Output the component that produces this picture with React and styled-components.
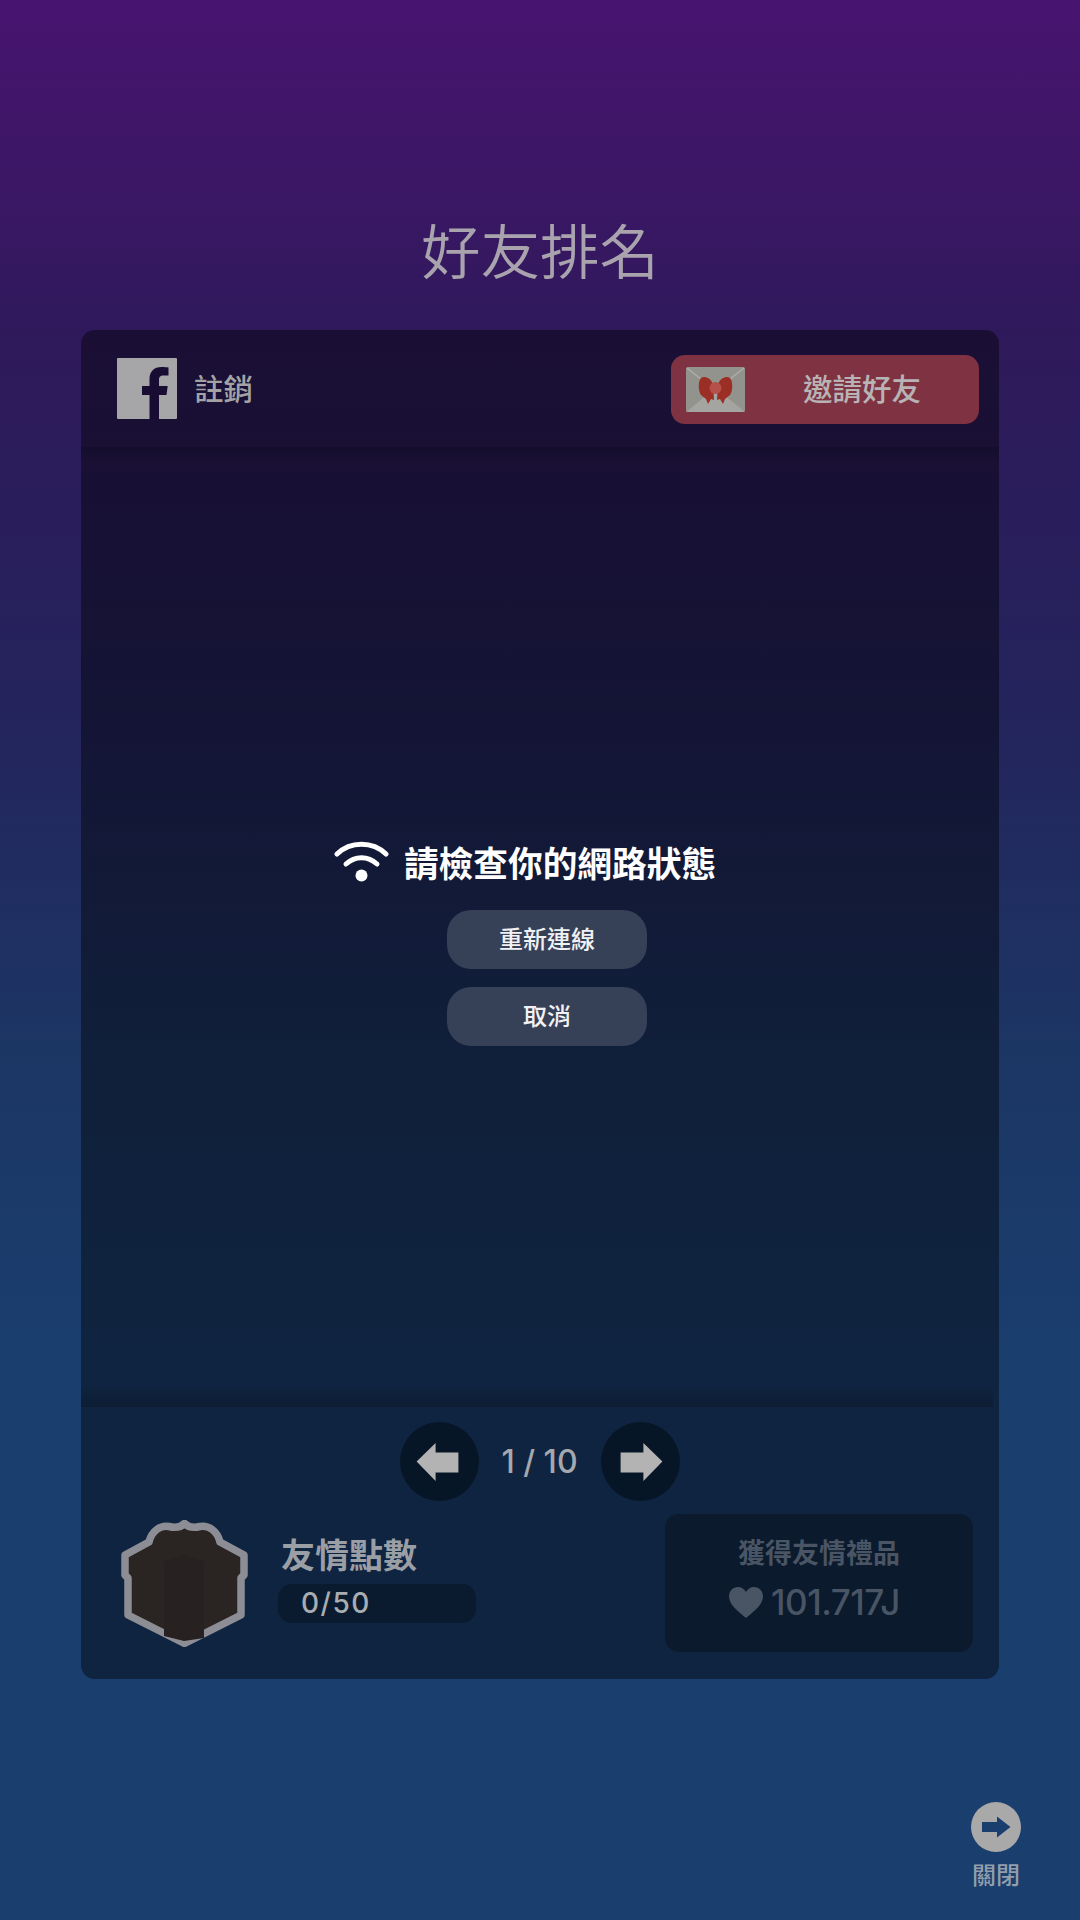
import React from 'react';
import styled, { createGlobalStyle } from 'styled-components';

const GlobalStyle = createGlobalStyle`
  html, body {
    margin: 0;
    padding: 0;
    background: #1a3e6e;
  }
  * {
    box-sizing: border-box;
  }
`;

const cjk = `"Noto Sans CJK TC", "Noto Sans", sans-serif`;
const latin = `Inter, "Noto Sans CJK TC", sans-serif`;

const Page = styled.div`
  width: 1080px;
  height: 1920px;
  overflow: hidden;
  display: flex;
  flex-direction: column;
  font-family: ${cjk};
  background: linear-gradient(
    to bottom,
    #47146f 0,
    #3c1766 180px,
    #2f195b 330px,
    #24235c 700px,
    #1c3664 1050px,
    #1a3e6e 1350px
  );
`;

const TitleBar = styled.div`
  height: 330px;
  padding-top: 208px;
  text-align: center;
`;

const Title = styled.h1`
  margin: 0;
  font-size: 59.5px;
  line-height: 80px;
  font-weight: 350;
  color: #a8a3ad;
`;

const Panel = styled.section`
  width: 918px;
  height: 1349px;
  margin-left: 81px;
  border-radius: 14px;
  overflow: hidden;
  background: rgba(0, 0, 0, 0.42);
  display: flex;
  flex-direction: column;
`;

const PanelHeader = styled.header`
  height: 117px;
  padding: 0 20px 0 36px;
  display: flex;
  align-items: center;
  justify-content: space-between;
  flex-shrink: 0;
`;

const Account = styled.div`
  display: flex;
  align-items: center;
  gap: 17px;
  color: #a3a3a6;
  font-size: 29.5px;
  font-weight: 500;
`;

const AccountLabel = styled.span`
  padding-bottom: 4px;
`;

const InviteButton = styled.button`
  width: 308px;
  height: 69px;
  margin-top: 1px;
  padding: 0 15px;
  border: 0;
  border-radius: 14px;
  background: #7f3342;
  color: #b8b3b5;
  font-family: inherit;
  font-size: 29.5px;
  font-weight: 500;
  display: flex;
  align-items: center;
`;

const InviteLabel = styled.span`
  margin-left: 58px;
  padding-bottom: 4px;
`;

const ListArea = styled.div`
  height: 960px;
  flex-shrink: 0;
  padding-top: 29px;
  display: flex;
  flex-direction: column;
  align-items: center;
  justify-content: center;
  background:
    linear-gradient(to bottom, rgba(0, 0, 0, 0.17), rgba(0, 0, 0, 0)) left top / 100% 16px no-repeat,
    linear-gradient(to top, rgba(0, 0, 0, 0.2), rgba(0, 0, 0, 0)) left bottom / calc(100% - 6px) 22px no-repeat;
`;

const Message = styled.div`
  display: flex;
  align-items: center;
  gap: 15px;
  margin-right: 30px;
  margin-bottom: 24px;
  color: #fff;
  font-size: 34.7px;
  font-weight: 700;
  line-height: 48px;
`;

const RetryButton = styled.button`
  width: 200px;
  height: 59px;
  margin-left: 14px;
  margin-bottom: 18px;
  padding: 0 0 3px;
  border: 0;
  border-radius: 24px;
  background: #364056;
  color: #f1f1f3;
  font-family: inherit;
  font-size: 24px;
  font-weight: 500;
  &:last-child {
    margin-bottom: 0;
  }
`;

const PanelFooter = styled.footer`
  flex: 1;
  padding: 15px 26px 26px 36px;
  display: flex;
  flex-direction: column;
`;

const Pager = styled.div`
  display: flex;
  align-items: center;
  justify-content: center;
  gap: 22px;
  margin-left: -11px;
`;

const PagerButton = styled.button`
  width: 79px;
  height: 79px;
  padding: 0 ${(props) => (props.$back ? '3px' : '0')} 0 ${(props) => (props.$back ? '0' : '2px')};
  border: 0;
  border-radius: 50%;
  background: #071626;
  display: flex;
  align-items: center;
  justify-content: center;
`;

const PagerText = styled.span`
  font-family: ${latin};
  font-size: 32px;
  font-weight: 500;
  color: #a5a8ad;
  min-width: 78px;
  white-space: nowrap;
  text-align: center;
`;

const FooterRow = styled.div`
  margin-top: 13px;
  display: flex;
  align-items: center;
  justify-content: space-between;
`;

const Points = styled.div`
  display: flex;
  align-items: center;
  gap: 30px;
  margin-left: 4px;
`;

const PointsInfo = styled.div`
  display: flex;
  flex-direction: column;
  margin-bottom: 13px;
`;

const PointsLabel = styled.div`
  font-size: 34px;
  font-weight: 700;
  line-height: 46px;
  color: #9a9fa6;
  margin-left: 3px;
`;

const PointsBar = styled.div`
  width: 198px;
  height: 39px;
  margin-top: 7px;
  padding-left: 23px;
  border-radius: 14px;
  background: #0a1b2f;
  color: #a9adb2;
  font-family: ${latin};
  font-size: 28px;
  font-weight: 500;
  letter-spacing: 1.5px;
  line-height: 39px;
`;

const RewardBox = styled.div`
  width: 308px;
  height: 138px;
  border-radius: 14px;
  background: #0b1a2c;
  color: #495464;
  display: flex;
  flex-direction: column;
  align-items: center;
  padding-top: 18px;
`;

const RewardTitle = styled.div`
  font-size: 27px;
  font-weight: 700;
  line-height: 40px;
`;

const RewardValue = styled.div`
  display: flex;
  align-items: center;
  gap: 8px;
  margin: 8px 9px 0 0;
  font-family: ${latin};
  font-size: 35px;
  font-weight: 500;
  letter-spacing: -0.5px;
  line-height: 44px;
`;

const CloseArea = styled.div`
  align-self: flex-end;
  margin: 123px 59px 0 0;
  display: flex;
  flex-direction: column;
  align-items: center;
`;

const CloseLabel = styled.div`
  margin-top: 6px;
  font-size: 24px;
  font-weight: 500;
  line-height: 32px;
  color: #939eab;
`;

const FacebookIcon = () => (
  <svg width="60" height="61" viewBox="0 0 60 61">
    <rect width="60" height="61" rx="1" fill="#a6a6a8" />
    <path
      d="M42 61V37h7.500l1.200-9H42v-6c0-3 1-4.500 4.500-4.500h5V9.500c-1.500-.3-4-.5-7-.5C37 9 32.500 13.500 32.500 21v7H25v9h7.500v24z"
      fill="#190c33"
    />
  </svg>
);

const EnvelopeIcon = () => (
  <svg width="59" height="45" viewBox="0 0 59 45">
    <rect width="59" height="45" rx="2" fill="#93938e" />
    <path d="M0 45l29.500-24L59 45z" fill="#a4a4a0" />
    <path d="M1 1l14 11M58 1L44 12" stroke="#aeaea9" strokeWidth="1.500" />
    <path d="M27 17C24 10 18 9 15 11c-3 3-3 13 0 17l5 4 2 5 3-5 3 1z" fill="#9b2f25" />
    <path d="M32 17c3-7 9-8 12-6 3 3 3 13 0 17l-5 4-2 5-3-5-3 1z" fill="#9b2f25" />
    <circle cx="29.500" cy="21" r="6" fill="#b5504a" />
  </svg>
);

const WifiIcon = () => (
  <svg width="55" height="42" viewBox="0 0 55 42" fill="none" stroke="#fff" strokeWidth="5" strokeLinecap="round">
    <path d="M3 13C16.500 0 38.500 0 52 13" />
    <path d="M12 23c9-8.500 22-8.500 31 0" />
    <circle cx="27.500" cy="34.500" r="6" fill="#fff" stroke="none" />
  </svg>
);

const LeftArrow = () => (
  <svg width="43" height="38" viewBox="0 0 44 40">
    <path d="M0 19.500L20 0v10h24v21H20v9z" fill="#b3b3b3" />
  </svg>
);

const RightArrow = () => (
  <svg width="43" height="38" viewBox="0 0 44 40">
    <path d="M44 19.500L24 0v10H0v21h24v9z" fill="#b3b3b3" />
  </svg>
);

const GiftIcon = () => (
  <svg width="127" height="127" viewBox="0 0 127 127">
    <path
      d="M63.500 3.500C60 7 54 8 48 6.500 40 5 31 10 28 22L4 35v20l3 3v37l56.500 28.500L120 95V58l3-3V35L99 22C96 10 87 5 79 6.500 73 8 67 7 63.500 3.500z"
      fill="#2a2423"
      stroke="#8d8e95"
      strokeWidth="7.500"
      strokeLinejoin="round"
    />
    <path d="M43 42l20-8 20 8v76l-20 3-20-5z" fill="#272121" />
  </svg>
);

const HeartIcon = () => (
  <svg width="34" height="31" viewBox="0 0 34 31">
    <path
      d="M17 31C10 25 0 18 0 9.500 0 4 4 0 9 0c3.500 0 6.500 2 8 5 1.500-3 4.500-5 8-5 5 0 9 4 9 9.500C34 18 24 25 17 31z"
      fill="#495464"
    />
  </svg>
);

const CloseIcon = () => (
  <svg width="50" height="50" viewBox="0 0 50 50">
    <circle cx="25" cy="25" r="25" fill="#a9a9aa" />
    <path d="M39.500 25L26 14.500V20H11v10h15v5.500z" fill="#1a3e6e" />
  </svg>
);

const App = () => {
  return (
    <Page>
      <GlobalStyle />
      <TitleBar>
        <Title>好友排名</Title>
      </TitleBar>
      <Panel>
        <PanelHeader>
          <Account>
            <FacebookIcon />
            <AccountLabel>註銷</AccountLabel>
          </Account>
          <InviteButton>
            <EnvelopeIcon />
            <InviteLabel>邀請好友</InviteLabel>
          </InviteButton>
        </PanelHeader>
        <ListArea>
          <Message>
            <WifiIcon />
            <span>請檢查你的網路狀態</span>
          </Message>
          <RetryButton>重新連線</RetryButton>
          <RetryButton>取消</RetryButton>
        </ListArea>
        <PanelFooter>
          <Pager>
            <PagerButton $back>
              <LeftArrow />
            </PagerButton>
            <PagerText>1 / 10</PagerText>
            <PagerButton>
              <RightArrow />
            </PagerButton>
          </Pager>
          <FooterRow>
            <Points>
              <GiftIcon />
              <PointsInfo>
                <PointsLabel>友情點數</PointsLabel>
                <PointsBar>0/50</PointsBar>
              </PointsInfo>
            </Points>
            <RewardBox>
              <RewardTitle>獲得友情禮品</RewardTitle>
              <RewardValue>
                <HeartIcon />
                <span>101.717J</span>
              </RewardValue>
            </RewardBox>
          </FooterRow>
        </PanelFooter>
      </Panel>
      <CloseArea>
        <CloseIcon />
        <CloseLabel>關閉</CloseLabel>
      </CloseArea>
    </Page>
  );
};

export default App;
